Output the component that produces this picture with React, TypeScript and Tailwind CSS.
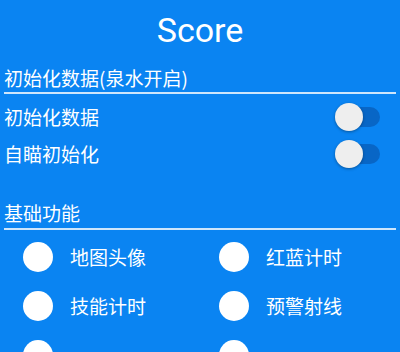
import React from "react";

function Toggle() {
  return (
    <div className="relative w-[45px] h-[28px] mr-[16px]">
      <div className="absolute right-0 top-[4px] w-[34px] h-[20px] rounded-full bg-[#0866c6]" />
      <div className="absolute left-0 top-0 w-[28px] h-[28px] rounded-full bg-[#eeeeee] shadow-[0_1px_3px_rgba(0,0,0,0.35)]" />
    </div>
  );
}

function Radio({ label }: { label: string }) {
  return (
    <div className="h-[49px] pl-[19px] flex items-center">
      <div className="w-[30px] h-[30px] rounded-full bg-white shrink-0" />
      <span className="ml-[17px] text-[19px] leading-[20px] text-white">{label}</span>
    </div>
  );
}

export default function App() {
  const font = { fontFamily: '"Noto Sans CJK SC", "Noto Sans", sans-serif' };
  return (
    <div className="w-[400px] h-[352px] overflow-hidden bg-[#0a84f2] text-white" style={font}>
      <div className="h-[60px] flex items-center justify-center">
        <span className="text-[34px] leading-[40px] text-white" style={{ fontFamily: "Roboto, sans-serif" }}>
          Score
        </span>
      </div>
      <div className="px-[4px]">
        <div className="pt-[8px] pb-[4px] text-[19px] leading-[20px] text-white">初始化数据(泉水开启)</div>
        <div className="h-[2px] bg-white/80" />
        <div className="mt-[4px]">
          <div className="h-[37px] flex items-center justify-between">
            <span className="text-[19px] leading-[20px]">初始化数据</span>
            <Toggle />
          </div>
          <div className="h-[37px] flex items-center justify-between">
            <span className="text-[19px] leading-[20px]">自瞄初始化</span>
            <Toggle />
          </div>
        </div>
        <div className="pt-[31px] pb-[5px] text-[19px] leading-[20px] text-white">基础功能</div>
        <div className="h-[2px] bg-white/80" />
        <div className="mt-[2px] grid grid-cols-2">
          <Radio label="地图头像" />
          <Radio label="红蓝计时" />
          <Radio label="技能计时" />
          <Radio label="预警射线" />
          <Radio label="" />
          <Radio label="" />
        </div>
      </div>
    </div>
  );
}
